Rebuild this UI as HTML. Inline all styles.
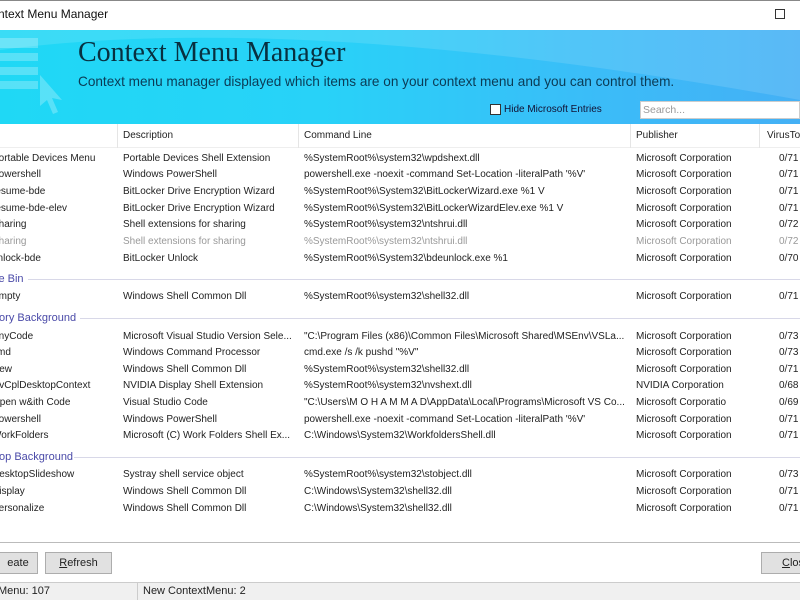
<!DOCTYPE html>
<html><head><meta charset="utf-8"><style>
*{margin:0;padding:0;box-sizing:border-box}
body{width:800px;height:600px;overflow:hidden;background:#fff;font-family:"Liberation Sans",sans-serif;font-size:10px;color:#222;position:relative}
.a{position:absolute;white-space:nowrap}
.r{position:absolute;left:0;width:800px;height:16px;line-height:16px}
.r span{position:absolute;white-space:nowrap;overflow:hidden}
.c1{left:-8px;width:124px}.c2{left:123px;width:178px}.c3{left:304px;width:328px}.c4{left:636px;width:140px}.c5{left:779px}
.g{color:#999}
.grp{position:absolute;left:0;width:800px;height:16px;line-height:16px;color:#4a4aa8;font-size:11px}
.grp i{position:absolute;right:0;top:8px;height:1px;background:#d8d8e8}
.btn{position:absolute;height:22px;border:1px solid #adadad;background:#e1e1e1;text-align:center;line-height:20px;font-size:11px}
</style></head><body>
<div class="a" style="left:0;top:0;width:800px;height:1px;background:#888"></div>
<div class="a" style="left:-2px;top:7px;font-size:12px;color:#111">ntext Menu Manager</div>
<div class="a" style="left:775px;top:9px;width:10px;height:10px;border:1.5px solid #333"></div>
<div class="a" style="left:0;top:30px;width:800px;height:94px;background:linear-gradient(90deg,#1fd8f5 0%,#28d2f8 40%,#3bbcf8 75%,#44b0f5 100%)"></div>
<svg class="a" style="left:0;top:30px" width="800" height="94"><path d="M0 20 Q300 -20 800 70 L800 0 L0 0Z" fill="#fff" opacity="0.12"/><g fill="#fff" opacity="0.25"><rect x="0" y="8" width="38" height="10"/><rect x="0" y="23" width="38" height="8"/><rect x="0" y="37" width="38" height="8"/><rect x="0" y="51" width="38" height="8"/><path d="M40 45 L62 70 L52 68 L58 82 L53 84 L47 70 L40 76Z"/></g></svg>
<div class="a" style="left:78px;top:37px;font-family:'Liberation Serif',serif;font-size:28px;color:#083040">Context Menu Manager</div>
<div class="a" style="left:78px;top:74px;font-size:13.6px;color:#0b3b55">Context menu manager displayed which items are on your context menu and you can control them.</div>
<div class="a" style="left:490px;top:104px;width:11px;height:11px;background:#fff;border:1px solid #333"></div>
<div class="a" style="left:504px;top:104px;font-size:10px;color:#113">Hide Microsoft Entries</div>
<div class="a" style="left:640px;top:101px;width:160px;height:18px;background:#fff;border:1px solid #ccc;color:#999;padding-left:2px;line-height:16px;font-size:10.5px">Search...</div>
<div class="a" style="left:0;top:124px;width:800px;height:24px;border-bottom:1px solid #eee"></div>
<div class="a" style="left:117px;top:124px;width:1px;height:24px;background:#e5e5e5"></div>
<div class="a" style="left:298px;top:124px;width:1px;height:24px;background:#e5e5e5"></div>
<div class="a" style="left:630px;top:124px;width:1px;height:24px;background:#e5e5e5"></div>
<div class="a" style="left:759px;top:124px;width:1px;height:24px;background:#e5e5e5"></div>
<div class="a" style="left:123px;top:130px">Description</div>
<div class="a" style="left:304px;top:130px">Command Line</div>
<div class="a" style="left:636px;top:130px">Publisher</div>
<div class="a" style="left:767px;top:130px">VirusTotal</div>

<div class="r" style="top:151px"><span class="c1">Portable Devices Menu</span><span class="c2">Portable Devices Shell Extension</span><span class="c3">%SystemRoot%\system32\wpdshext.dll</span><span class="c4">Microsoft Corporation</span><span class="c5">0/71</span></div>
<div class="r" style="top:167px"><span class="c1">Powershell</span><span class="c2">Windows PowerShell</span><span class="c3">powershell.exe -noexit -command Set-Location -literalPath '%V'</span><span class="c4">Microsoft Corporation</span><span class="c5">0/71</span></div>
<div class="r" style="top:184px"><span class="c1">resume-bde</span><span class="c2">BitLocker Drive Encryption Wizard</span><span class="c3">%SystemRoot%\System32\BitLockerWizard.exe %1 V</span><span class="c4">Microsoft Corporation</span><span class="c5">0/71</span></div>
<div class="r" style="top:201px"><span class="c1">resume-bde-elev</span><span class="c2">BitLocker Drive Encryption Wizard</span><span class="c3">%SystemRoot%\System32\BitLockerWizardElev.exe %1 V</span><span class="c4">Microsoft Corporation</span><span class="c5">0/71</span></div>
<div class="r" style="top:217px"><span class="c1">Sharing</span><span class="c2">Shell extensions for sharing</span><span class="c3">%SystemRoot%\system32\ntshrui.dll</span><span class="c4">Microsoft Corporation</span><span class="c5">0/72</span></div>
<div class="r g" style="top:234px"><span class="c1">Sharing</span><span class="c2">Shell extensions for sharing</span><span class="c3">%SystemRoot%\system32\ntshrui.dll</span><span class="c4">Microsoft Corporation</span><span class="c5">0/72</span></div>
<div class="r" style="top:251px"><span class="c1">unlock-bde</span><span class="c2">BitLocker Unlock</span><span class="c3">%SystemRoot%\System32\bdeunlock.exe %1</span><span class="c4">Microsoft Corporation</span><span class="c5">0/70</span></div>

<div class="grp" style="top:271px"><span style="position:absolute;left:-4px">le Bin</span><i style="left:28px"></i></div>
<div class="r" style="top:289px"><span class="c1">Empty</span><span class="c2">Windows Shell Common Dll</span><span class="c3">%SystemRoot%\system32\shell32.dll</span><span class="c4">Microsoft Corporation</span><span class="c5">0/71</span></div>

<div class="grp" style="top:310px"><span style="position:absolute;left:-4px">tory Background</span><i style="left:80px"></i></div>
<div class="r" style="top:329px"><span class="c1">AnyCode</span><span class="c2">Microsoft Visual Studio Version Sele...</span><span class="c3">"C:\Program Files (x86)\Common Files\Microsoft Shared\MSEnv\VSLa...</span><span class="c4">Microsoft Corporation</span><span class="c5">0/73</span></div>
<div class="r" style="top:345px"><span class="c1">cmd</span><span class="c2">Windows Command Processor</span><span class="c3">cmd.exe /s /k pushd "%V"</span><span class="c4">Microsoft Corporation</span><span class="c5">0/73</span></div>
<div class="r" style="top:362px"><span class="c1">New</span><span class="c2">Windows Shell Common Dll</span><span class="c3">%SystemRoot%\system32\shell32.dll</span><span class="c4">Microsoft Corporation</span><span class="c5">0/71</span></div>
<div class="r" style="top:378px"><span class="c1">NvCplDesktopContext</span><span class="c2">NVIDIA Display Shell Extension</span><span class="c3">%SystemRoot%\system32\nvshext.dll</span><span class="c4">NVIDIA Corporation</span><span class="c5">0/68</span></div>
<div class="r" style="top:395px"><span class="c1">Open w&amp;ith Code</span><span class="c2">Visual Studio Code</span><span class="c3">"C:\Users\M O H A M M A D\AppData\Local\Programs\Microsoft VS Co...</span><span class="c4">Microsoft Corporatio</span><span class="c5">0/69</span></div>
<div class="r" style="top:412px"><span class="c1">Powershell</span><span class="c2">Windows PowerShell</span><span class="c3">powershell.exe -noexit -command Set-Location -literalPath '%V'</span><span class="c4">Microsoft Corporation</span><span class="c5">0/71</span></div>
<div class="r" style="top:428px"><span class="c1">WorkFolders</span><span class="c2">Microsoft (C) Work Folders Shell Ex...</span><span class="c3">C:\Windows\System32\WorkfoldersShell.dll</span><span class="c4">Microsoft Corporation</span><span class="c5">0/71</span></div>

<div class="grp" style="top:449px"><span style="position:absolute;left:-4px">top Background</span><i style="left:74px"></i></div>
<div class="r" style="top:467px"><span class="c1">DesktopSlideshow</span><span class="c2">Systray shell service object</span><span class="c3">%SystemRoot%\system32\stobject.dll</span><span class="c4">Microsoft Corporation</span><span class="c5">0/73</span></div>
<div class="r" style="top:484px"><span class="c1">Display</span><span class="c2">Windows Shell Common Dll</span><span class="c3">C:\Windows\System32\shell32.dll</span><span class="c4">Microsoft Corporation</span><span class="c5">0/71</span></div>
<div class="r" style="top:501px"><span class="c1">Personalize</span><span class="c2">Windows Shell Common Dll</span><span class="c3">C:\Windows\System32\shell32.dll</span><span class="c4">Microsoft Corporation</span><span class="c5">0/71</span></div>

<div class="a" style="left:0;top:542px;width:800px;height:1px;background:#bbb"></div>
<div class="btn" style="left:-20px;top:552px;width:58px;padding-left:18px">eate</div>
<div class="btn" style="left:45px;top:552px;width:67px"><u>R</u>efresh</div>
<div class="btn" style="left:761px;top:552px;width:60px;text-align:left;padding-left:20px"><u>C</u>lose</div>
<div class="a" style="left:0;top:582px;width:800px;height:18px;background:#f0f0f0;border-top:1px solid #ccc"></div>
<div class="a" style="left:137px;top:583px;width:1px;height:17px;background:#ccc"></div>
<div class="a" style="left:-2px;top:585px;font-size:11px">Menu: 107</div>
<div class="a" style="left:143px;top:585px;font-size:11px">New ContextMenu: 2</div>
</body></html>
